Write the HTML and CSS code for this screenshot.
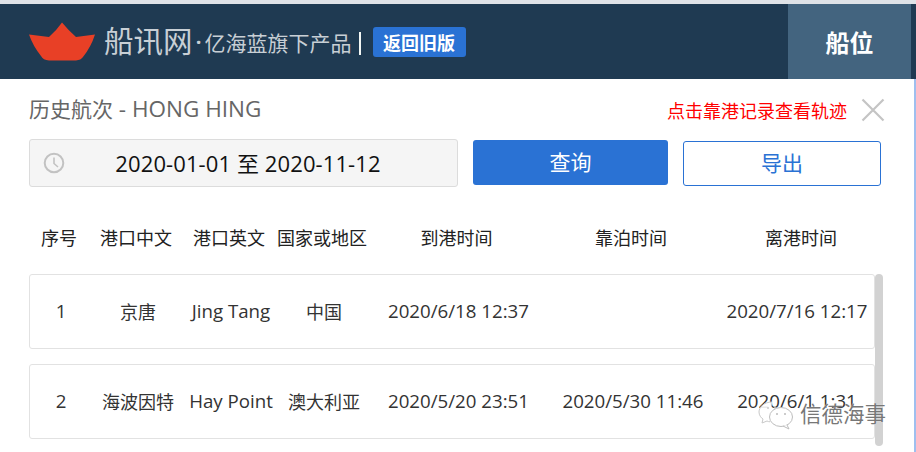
FILE: index.html
```html
<!DOCTYPE html>
<html lang="zh">
<head>
<meta charset="utf-8">
<title>历史航次</title>
<link rel="stylesheet" href="styles.css">
</head>
<body>
<div class="page">
  <header class="topbar">
    <div class="brand">
      <svg class="boat" width="66" height="40" viewBox="0 0 66 40"><path d="M0 12.5 L20 15 Q27 9 33 0.500 Q40 9 47 15 L66 12.500 Q62 25 54 35 Q52 38 47 38.500 L20 38.500 Q14 38 12 34 Q4 24 0 12.500 Z" fill="#e84026"/></svg>
      <span class="brand-name">船讯网</span>
      <span class="brand-dot">·</span>
      <span class="brand-sub">亿海蓝旗下产品</span>
      <span class="brand-sep"></span>
      <a class="old-btn">返回旧版</a>
    </div>
    <div class="tab">船位</div>
  </header>
  <main class="panel">
    <div class="title-row">
      <h1 class="title">历史航次<span class="title-en"> - HONG HING</span></h1>
      <div class="hint">点击靠港记录查看轨迹</div>
      <svg class="close" width="24" height="24" viewBox="0 0 24 24"><path d="M1.500 1.500 L22.500 22.500 M22.500 1.500 L1.500 22.500" stroke="#c4c4c4" stroke-width="2.200" fill="none"/></svg>
    </div>
    <div class="toolbar">
      <div class="date">
        <svg class="clock" width="22" height="22" viewBox="0 0 22 22"><circle cx="11" cy="11" r="9.300" fill="none" stroke="#c2c2c2" stroke-width="2"/><path d="M11 5.500 V11.500 L15 15" fill="none" stroke="#c2c2c2" stroke-width="1.600"/></svg>
        <span class="date-text">2020-01-01 至 2020-11-12</span>
      </div>
      <button class="btn btn-primary">查询</button>
      <button class="btn btn-outline">导出</button>
    </div>
    <div class="cols head">
      <span>序号</span><span>港口中文</span><span>港口英文</span><span>国家或地区</span><span>到港时间</span><span>靠泊时间</span><span>离港时间</span>
    </div>
    <div class="list-wrap">
      <div class="list">
        <div class="cols row">
          <span class="en">1</span><span>京唐</span><span class="en">Jing Tang</span><span>中国</span><span class="en">2020/6/18 12:37</span><span></span><span class="en">2020/7/16 12:17</span>
        </div>
        <div class="cols row">
          <span class="en">2</span><span>海波因特</span><span class="en">Hay Point</span><span>澳大利亚</span><span class="en">2020/5/20 23:51</span><span class="en">2020/5/30 11:46</span><span class="en">2020/6/1 1:31</span>
        </div>
      </div>
      <div class="scrollbar"></div>
    </div>
    <div class="watermark">
      <svg width="36" height="30" viewBox="0 0 36 30"><path d="M14 2 C6 2 1 7 1 12 C1 15 3 18 5 19 L4 23 L9 21 C10 21.500 11 21.700 12 21.800" fill="rgba(255,255,255,.9)" stroke="#c8c8c8"/><ellipse cx="23" cy="17" rx="11.500" ry="9.500" fill="rgba(255,255,255,.9)" stroke="#bdbdbd"/><path d="M29 25 L31 29 L25 26" fill="#fff" stroke="#bdbdbd"/><circle cx="19" cy="14" r="1" fill="#bbb"/><circle cx="27" cy="14" r="1" fill="#bbb"/><circle cx="10" cy="8" r="1" fill="#ccc"/><circle cx="17" cy="8" r="1" fill="#ccc"/></svg>
      <span>信德海事</span>
    </div>
  </main>
</div>
</body>
</html>
```
FILE: styles.css
```css
* { box-sizing: border-box; }
html, body { margin: 0; height: 100%; overflow: hidden; background: #fff; }
body { font-family: "Open Sans", "Noto Sans CJK SC", sans-serif; color: #222; }
.page { width: 916px; height: 452px; padding-top: 4px; background: #dfe2e7; display: flex; flex-direction: column; overflow: hidden; }
.topbar { height: 75px; flex: none; background: #1f3a52; display: flex; justify-content: space-between; padding-right: 5px; }
.brand { display: flex; align-items: center; padding-left: 29px; }
.boat { margin-top: 1px; margin-right: 9px; }
.brand-name { font-size: 29.500px; color: #c8cfd5; line-height: 1; margin-top: -2px; }
.brand-dot { font-size: 20px; color: #c8cfd5; width: 12px; text-align: center; font-weight: 700; }
.brand-sub { font-size: 21px; color: #c8cfd5; line-height: 1; margin-top: 3px; }
.brand-sep { width: 2px; height: 23px; background: #f2f6f4; margin: 3px 12px 0 7px; }
.old-btn { width: 93px; height: 30px; margin-top: 1px; background: #2a72d4; border-radius: 3px; color: #fff; font-weight: 700; font-size: 18px; display: flex; align-items: center; justify-content: center; }
.tab { width: 123px; background: #43647f; color: #fff; font-weight: 700; font-size: 24px; display: flex; align-items: center; justify-content: center; }
.panel { flex: 1; background: #fff; border-right: 2px solid #9fbfef; padding: 0 0 0 29px; position: relative; }
.title-row { height: 60px; display: flex; align-items: center; }
.title { font-size: 21px; font-weight: 400; color: #666; margin: -2px 0 0; flex: 1; }
.title-en { font-size: 22.500px; }
.hint { font-size: 18px; color: #f00; margin-right: 14px; margin-top: 2px; }
.close { margin-right: 29px; margin-top: 2px; }
.toolbar { display: flex; align-items: flex-start; height: 48px; }
.date { width: 429px; height: 48px; background: #f5f5f5; border: 1px solid #dcdcdc; border-radius: 3px; display: flex; align-items: center; padding-left: 13px; }
.clock { flex: none; }
.date-text { flex: 1; text-align: center; font-size: 22px; letter-spacing: 0.100px; color: #111; padding-right: 26px; margin-top: -3px; }
.btn { font-family: inherit; font-size: 21px; border-radius: 3px; height: 45px; padding: 0 0 3px; cursor: pointer; }
.btn-primary { width: 195px; margin: 1px 0 0 15px; background: #2a72d4; color: #fff; border: 0; }
.btn-outline { width: 198px; margin: 2px 0 0 15px; background: #fff; color: #2a72d4; border: 1px solid #2a72d4; }
.cols { display: grid; grid-template-columns: 60px 94px 92px 94px 175px 174px 1fr; align-items: center; text-align: center; font-size: 18px; white-space: nowrap; }
.cols span { display: block; }
.head { height: 87px; width: 855px; color: #222; padding-top: 12px; }
.list-wrap { display: flex; align-items: flex-start; }
.list { width: 846px; display: flex; flex-direction: column; gap: 15px; }
.row { height: 75px; border: 1px solid #e2e2e2; border-radius: 3px; padding: 0 0 2px 1px; color: #333; }
.cols .en { font-size: 18.700px; }
.scrollbar { width: 8px; height: 172px; background: #d2d2d2; border-radius: 4px; }
.watermark { position: absolute; left: 758px; top: 316px; display: flex; align-items: center; font-size: 21.500px; color: #777; }
.watermark svg { margin-right: 6px; margin-top: 5px; }
.watermark span { text-shadow: 0 0 1px #fff; }
```
